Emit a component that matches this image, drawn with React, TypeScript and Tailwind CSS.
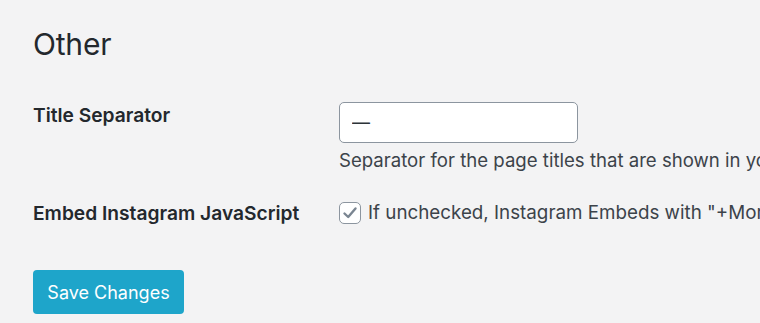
export default function App() {
  return (
    <div className="w-[760px] h-[323px] overflow-hidden bg-[#f3f3f4] pl-[33px] pt-[24px] font-['Inter','Liberation_Sans',sans-serif] text-[#23282d]">
      <h2 className="text-[30px] leading-[40px] font-normal tracking-[-0.2px]">Other</h2>

      <div className="mt-[38px] grid grid-cols-[306px_1fr] whitespace-nowrap">
        <div className="pt-[1px] text-[19.2px] leading-[24px] font-semibold">Title Separator</div>
        <div>
          <input
            type="text"
            defaultValue="—"
            className="block w-[239px] h-[41px] rounded-[5px] border border-[#8c959f] bg-white px-[12px] text-[18px] text-[#2c3338] outline-none"
          />
          <p className="mt-[5px] text-[18.6px] leading-[24px] text-[#3c434a]">
            Separator for the page titles that are shown in your browser tab.
          </p>
        </div>

        <div className="pt-[29px] text-[19.2px] leading-[24px] font-semibold">Embed Instagram JavaScript</div>
        <div className="pt-[29px] flex items-center gap-[7px] text-[18.8px] leading-[24px] text-[#3c434a]">
          <span className="flex h-[22px] w-[22px] shrink-0 items-center justify-center rounded-[5px] border-[1.5px] border-[#8c959f] bg-white">
            <svg width="16" height="16" viewBox="0 0 16 16">
              <path d="M2.5 8.5 L6.2 12 L13.5 3.5" fill="none" stroke="#7a8591" strokeWidth="2.4" strokeLinecap="round" strokeLinejoin="round" />
            </svg>
          </span>
          <span>If unchecked, Instagram Embeds with "+More" links will not be loaded.</span>
        </div>
      </div>

      <button className="mt-[45px] h-[44px] w-[151px] rounded-[4px] bg-[#1ea5ca] text-[18px] text-white">
        Save Changes
      </button>
    </div>
  );
}
